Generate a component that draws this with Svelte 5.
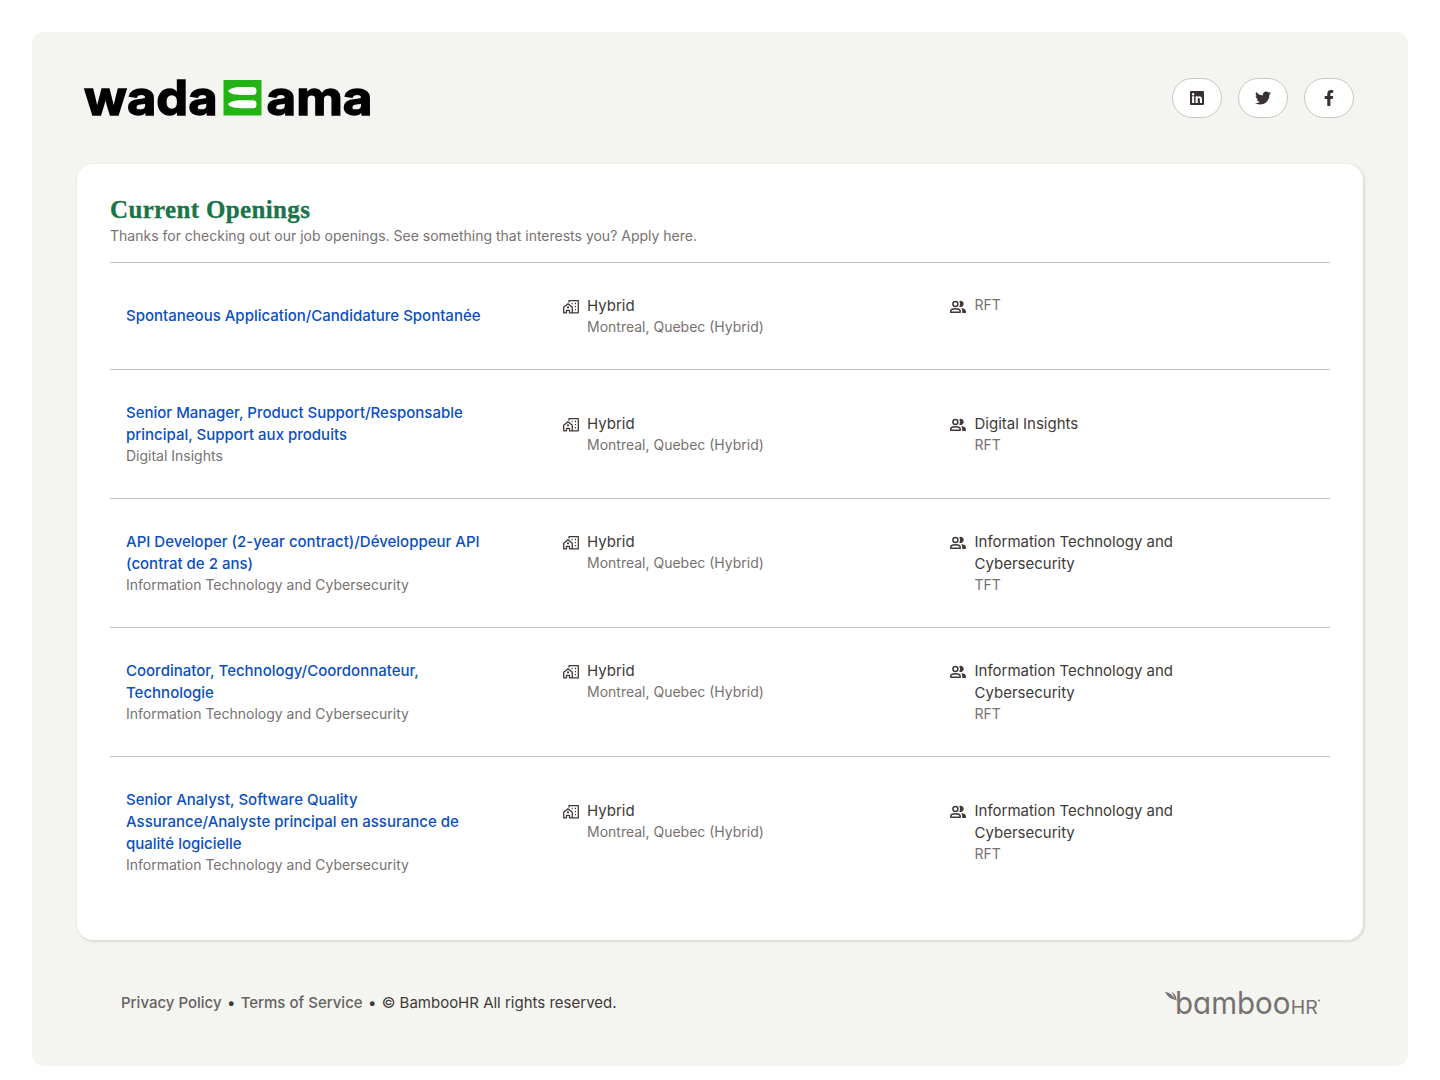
<script>
  const openings = [
    { title: 'Spontaneous Application/Candidature Spontanée', team: '', department: '', type: 'RFT' },
    { title: 'Senior Manager, Product Support/Responsable principal, Support aux produits', team: 'Digital Insights', department: 'Digital Insights', type: 'RFT' },
    { title: 'API Developer (2-year contract)/Développeur API (contrat de 2 ans)', team: 'Information Technology and Cybersecurity', department: 'Information Technology and Cybersecurity', type: 'TFT' },
    { title: 'Coordinator, Technology/Coordonnateur, Technologie', team: 'Information Technology and Cybersecurity', department: 'Information Technology and Cybersecurity', type: 'RFT' },
    { title: 'Senior Analyst, Software Quality Assurance/Analyste principal en assurance de qualité logicielle', team: 'Information Technology and Cybersecurity', department: 'Information Technology and Cybersecurity', type: 'RFT' }
  ];
</script>

<main>
  <header>
    <svg class="brand" width="292" height="48" viewBox="0 0 292 48" aria-label="wada ama">
      <text x="2" y="41" textLength="133.500" lengthAdjust="spacingAndGlyphs">wada</text>
      <rect x="141.500" y="6" width="38" height="35.500" fill="#23b314" />
      <path d="M146 17C148 14 153 12.900 159 12.900H171Q174.500 12.900 174.500 16.900T171 20.900H159C153 20.900 148 20 146 17ZM146 30.300C148 27.300 153 26.200 159 26.200H171Q174.500 26.200 174.500 30.200T171 34.200H159C153 34.200 148 33.300 146 30.300Z" fill="#fff" />
      <text x="184.500" y="41" textLength="106" lengthAdjust="spacingAndGlyphs">ama</text>
    </svg>
    <nav>
      <a href="#linkedin" aria-label="LinkedIn">
        <svg width="14" height="16" viewBox="0 0 14 16"><path fill-rule="evenodd" d="M1 1h12q1 0 1 1v12q0 1-1 1H1q-1 0-1-1V2q0-1 1-1ZM2.1 6.3V13h2.1V6.3ZM3.15 3.1a1.2 1.2 0 1 0 0 2.4 1.2 1.2 0 0 0 0-2.4ZM5.6 6.3V13h2.1V9.6c0-2 2.2-2 2.2 0V13H12V9.2c0-3.4-3.1-3.7-4.3-2V6.3Z" /></svg>
      </a>
      <a href="#twitter" aria-label="Twitter">
        <svg width="16" height="16" viewBox="0 0 512 512"><path d="M459.4 151.7c.3 4.5.3 9.1.3 13.6 0 138.7-105.6 298.6-298.6 298.6-59.5 0-114.7-17.2-161.1-47.1 8.4 1 16.6 1.3 25.3 1.3 49.1 0 94.2-16.6 130.3-44.8-46.1-1-84.8-31.2-98.1-72.8 6.5 1 13 1.6 19.8 1.6 9.4 0 18.8-1.3 27.6-3.6-48.1-9.7-84.1-52-84.1-103v-1.3c14 7.8 30.2 12.7 47.4 13.3-28.3-18.8-46.8-51-46.8-87.4 0-19.5 5.2-37.4 14.3-53 51.7 63.7 129.3 105.3 216.4 109.8-1.6-7.8-2.6-15.9-2.6-24 0-57.8 46.8-104.9 104.9-104.9 30.2 0 57.5 12.7 76.7 33.1 23.7-4.5 46.5-13.3 66.6-25.3-7.8 24.4-24.4 44.8-46.1 57.8 21.1-2.3 41.6-8.1 60.4-16.2-14.3 20.8-32.2 39.3-52.6 54.3Z" /></svg>
      </a>
      <a href="#facebook" aria-label="Facebook">
        <svg width="10" height="16" viewBox="0 0 320 512"><path d="m279.1 288 14.3-92.7h-89v-60.1c0-25.4 12.4-50.1 52.2-50.1H297V6.3S260.4 0 225.4 0c-73.2 0-121 44.4-121 124.7v70.6H23V288h81.4v224h100V288Z" /></svg>
      </a>
    </nav>
  </header>

  <section class="card">
    <h1>Current Openings</h1>
    <p class="intro">Thanks for checking out our job openings. See something that interests you? Apply here.</p>
    <ul>
      {#each openings as job}
        <li>
          <div class="position">
            <a href="#job">{job.title}</a>
            {#if job.team}<p class="minor">{job.team}</p>{/if}
          </div>
          <div class="details">
            <div class="detail">
              <svg class="icon" width="18" height="16" viewBox="0 0 18 16" fill="none" stroke="currentColor" stroke-width="1.3" stroke-linejoin="round">
                <path d="M1.700 8.300 6 4.800l4.300 3.500v5.500H7.500v-2.500h-3v2.500H1.700ZM7 3.500V1.700h9.300v12.100H10.300" />
                <path d="M9.600 4.500h1M12.800 4.500h1.200M12.800 7.600h1.200M12.800 10.700h1.200" />
                <circle cx="6" cy="8.300" r=".5" />
              </svg>
              <div>
                <p class="major">Hybrid</p>
                <p class="minor">Montreal, Quebec (Hybrid)</p>
              </div>
            </div>
            <div class="detail">
              <svg class="icon" width="18" height="16" viewBox="1 0 18 16" fill="none" stroke="currentColor" stroke-width="1.5">
                <circle cx="6.400" cy="4.900" r="2.500" />
                <path d="M1.700 13.300v-1.100c0-3.400 9.500-3.400 9.500 0v1.100Z" stroke-linejoin="round" />
                <path d="M10.300 1.900a3.200 3.200 0 1 1 0 5.900q1.600-3 0-5.900ZM12.100 9c3 .3 4.800 1.500 4.800 3.200V14h-3.700v-2q0-1.800-1.100-3Z" fill="currentColor" stroke="none" />
              </svg>
              <div>
                {#if job.department}<p class="major">{job.department}</p>{/if}
                <p class="minor">{job.type}</p>
              </div>
            </div>
          </div>
        </li>
      {/each}
    </ul>
  </section>

  <footer>
    <div class="legal">
      <a href="#privacy">Privacy Policy</a><span class="dot">•</span><a href="#terms">Terms of Service</a><span class="dot">•</span><span>© BambooHR All rights reserved.</span>
    </div>
    <svg class="bamboo" width="160" height="40" viewBox="0 0 160 40" aria-label="bambooHR">
      <path d="M4 9C8 9 12 12 14.500 17C9.500 16 6 13 4 9ZM10 9C14 10 16 14 15.500 18C12.500 15 13 11 10 9Z" />
      <text x="14" y="31" font-size="30.500" textLength="115.500" lengthAdjust="spacingAndGlyphs">bamboo</text>
      <text x="129.700" y="31" font-size="18.500" textLength="27" lengthAdjust="spacingAndGlyphs">HR</text>
      <circle cx="158.200" cy="17.500" r="1" />
    </svg>
  </footer>
</main>

<style>
  :global(body) { margin: 0; background: #fff; }
  main {
    box-sizing: border-box;
    height: 1034px;
    margin: 32px;
    padding: 42px 45px 0;
    border-radius: 12px;
    background: #f4f4f0;
    color: #403a37;
    font: 15px/22px Inter, sans-serif;
  }
  header { display: flex; align-items: center; justify-content: space-between; height: 48px; padding: 0 9px 0 5px; }
  svg { overflow: visible; }
  .brand { display: block; }
  .brand text { font: 700 48px/1 Inter, sans-serif; fill: #000; stroke: #000; stroke-width: 1.4; }
  nav { display: flex; gap: 16px; }
  nav a {
    box-sizing: border-box;
    display: flex;
    align-items: center;
    justify-content: center;
    width: 50px;
    height: 40px;
    border: 1px solid #c9c7c4;
    border-radius: 20px;
    background: #fff;
    fill: #38312f;
  }
  .card {
    box-sizing: border-box;
    height: 776px;
    margin-top: 42px;
    padding: 31px 33px 32px;
    border-radius: 16px;
    background: #fff;
    box-shadow: 1px 1px 2px 1px rgba(56, 49, 47, .12);
  }
  h1 { margin: 0 0 1px; color: #197447; font: 700 25px/30px "Liberation Serif", serif; letter-spacing: .35px; white-space: nowrap; -webkit-text-stroke: .3px #197447; }
  p { margin: 0; }
  .intro, .minor { color: #777270; font-size: 14px; line-height: 20px; }
  ul { list-style: none; margin: 16px 0 0; padding: 0; }
  li { display: flex; align-items: center; padding: 32px 16px; border-top: 1px solid #c2c0be; }
  .position { flex: none; width: 388px; padding-right: 28px; box-sizing: border-box; }
  .position a { display: block; color: #0b4fc0; font-weight: 500; text-decoration: none; }
  .details { display: flex; flex: none; margin-left: 48px; }
  .detail { display: flex; gap: 7px; width: 387.500px; box-sizing: border-box; padding-right: 130px; }
  .icon { flex: none; margin-top: 4px; }
  footer { display: flex; align-items: center; justify-content: space-between; height: 126px; padding: 0 42px 0 44px; }
  .legal a { color: #676260; font-weight: 500; text-decoration: none; }
  .dot { margin: 0 5.300px; }
  .bamboo { fill: #777270; }
  .bamboo text { font-family: Inter, sans-serif; font-feature-settings: "cv11" 1; }
</style>
